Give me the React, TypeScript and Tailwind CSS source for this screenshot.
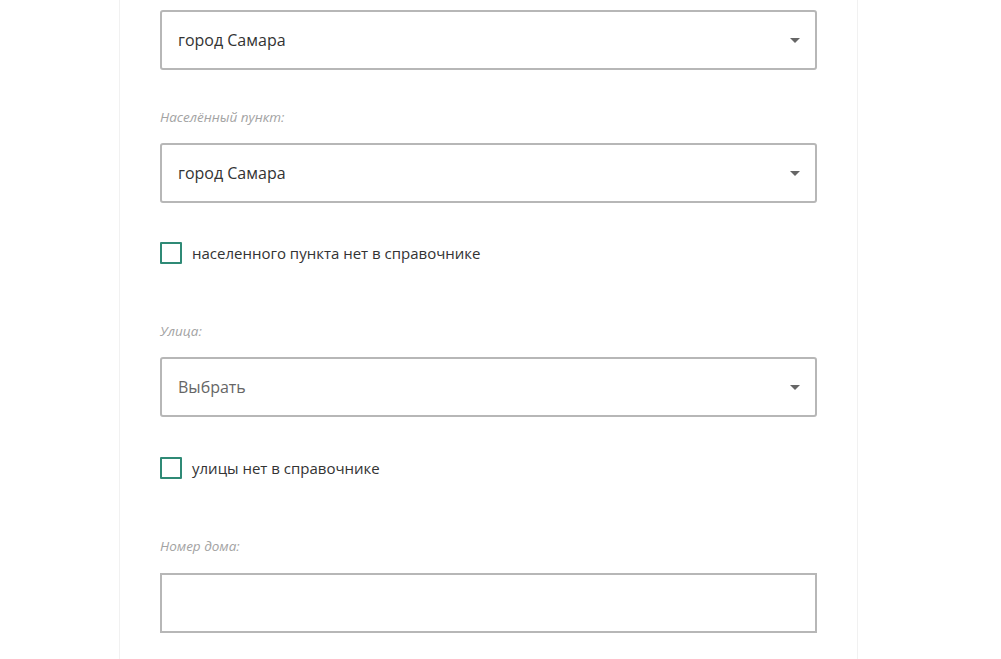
import React from 'react';

function Caret() {
  return (
    <svg width="10" height="5" viewBox="0 0 10 5" className="shrink-0">
      <path d="M0 0 L10 0 L5 5 Z" fill="#666666" />
    </svg>
  );
}

function Select({ value, placeholder }: { value?: string; placeholder?: string }) {
  return (
    <div className="h-[60px] w-[657px] rounded-[3px] border-2 border-[#b7b7b7] bg-white flex items-center justify-between pl-[16px] pr-[15px]">
      {value ? (
        <span className="text-[16px] text-[#333333]">{value}</span>
      ) : (
        <span className="text-[16px] text-[#666666]">{placeholder}</span>
      )}
      <Caret />
    </div>
  );
}

function Label({ text }: { text: string }) {
  return <div className="text-[13.5px] leading-[18px] italic text-[#a3a3a3]">{text}</div>;
}

function Check({ text }: { text: string }) {
  return (
    <label className="flex items-center gap-[10px] h-[22px]">
      <span className="w-[22px] h-[22px] border-2 border-[#2f8a76] rounded-[1px] bg-white" />
      <span className="text-[15px] leading-[22px] text-[#333333]">{text}</span>
    </label>
  );
}

export default function App() {
  return (
    <div className="min-h-[659px] bg-white" style={{ fontFamily: '"Open Sans", "Noto Sans", sans-serif' }}>
      <div className="ml-[119px] w-[739px] min-h-[659px] border-x border-[#f1f1f1] bg-white px-[40px] pt-[10px] pb-[40px]">
        <Select value="город Самара" />

        <div className="mt-[38px]">
          <Label text="Населённый пункт:" />
        </div>
        <div className="mt-[17px]">
          <Select value="город Самара" />
        </div>

        <div className="mt-[39px]">
          <Check text="населенного пункта нет в справочнике" />
        </div>

        <div className="mt-[58px]">
          <Label text="Улица:" />
        </div>
        <div className="mt-[17px]">
          <Select placeholder="Выбрать" />
        </div>

        <div className="mt-[40px]">
          <Check text="улицы нет в справочнике" />
        </div>

        <div className="mt-[58px]">
          <Label text="Номер дома:" />
        </div>
        <div className="mt-[18px]">
          <div className="h-[60px] w-[657px] border-2 border-[#b7b7b7] bg-white" />
        </div>
      </div>
    </div>
  );
}
